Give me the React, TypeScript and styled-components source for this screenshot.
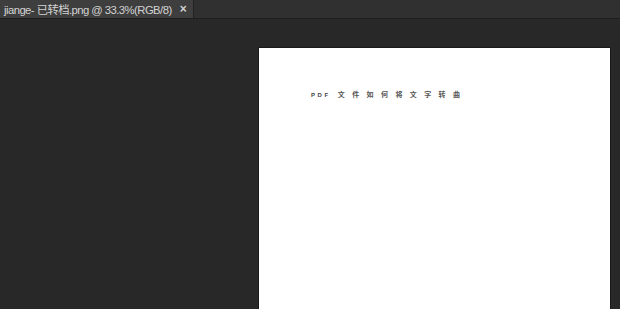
import styled, { createGlobalStyle } from 'styled-components';

const Global = createGlobalStyle`
  html, body {
    margin: 0;
    padding: 0;
    background: #282828;
    overflow: hidden;
  }
  #root {
    width: 620px;
    height: 309px;
  }
`;

export default function App() {
  return (
    <>
      <Global />
      <Window>
        <TabBar>
          <Tab>
            <TabTitle>jiange- 已转档.png @ 33.3%(RGB/8)</TabTitle>
            <Close>×</Close>
          </Tab>
        </TabBar>
        <Canvas>
          <Page>
            <Heading>
              <Latin>PDF</Latin>
              <Han>文件如何将文字转曲</Han>
            </Heading>
          </Page>
        </Canvas>
      </Window>
    </>
  );
}

const Window = styled.div`
  width: 620px;
  height: 309px;
  display: flex;
  flex-direction: column;
  background: #282828;
  font-family: "Liberation Sans", "Noto Sans CJK SC", sans-serif;
`;

const TabBar = styled.div`
  height: 18px;
  display: flex;
  background: #303030;
  border-bottom: 1px solid #1e1e1e;
`;

const Tab = styled.div`
  width: 189px;
  flex: none;
  display: flex;
  align-items: center;
  gap: 8px;
  padding-left: 4px;
  background: #3e3e3e;
  border-right: 1px solid #222;
`;

const TabTitle = styled.span`
  font-size: 11.3px;
  letter-spacing: -0.55px;
  color: #d2d2d2;
  white-space: nowrap;
`;

const Close = styled.span`
  font-size: 12px;
  font-weight: 700;
  color: #cfcfcf;
  line-height: 1;
`;

const Canvas = styled.div`
  flex: 1;
  padding: 29px 10px 0 259px;
`;

const Page = styled.div`
  width: 351px;
  height: 100%;
  background: #ffffff;
  box-shadow: 0 0 0 1px #1a1a1a;
  padding: 43px 0 0 52px;
  box-sizing: border-box;
`;

const Heading = styled.div`
  display: flex;
  align-items: center;
  gap: 7px;
  color: #444;
  line-height: 1;
`;

const Latin = styled.span`
  font-family: "Liberation Sans", sans-serif;
  font-size: 6px;
  font-weight: 700;
  letter-spacing: 2.6px;
`;

const Han = styled.span`
  font-family: "Noto Sans CJK SC", sans-serif;
  font-size: 7px;
  font-weight: 700;
  letter-spacing: 7.4px;
  color: #555;
`;
